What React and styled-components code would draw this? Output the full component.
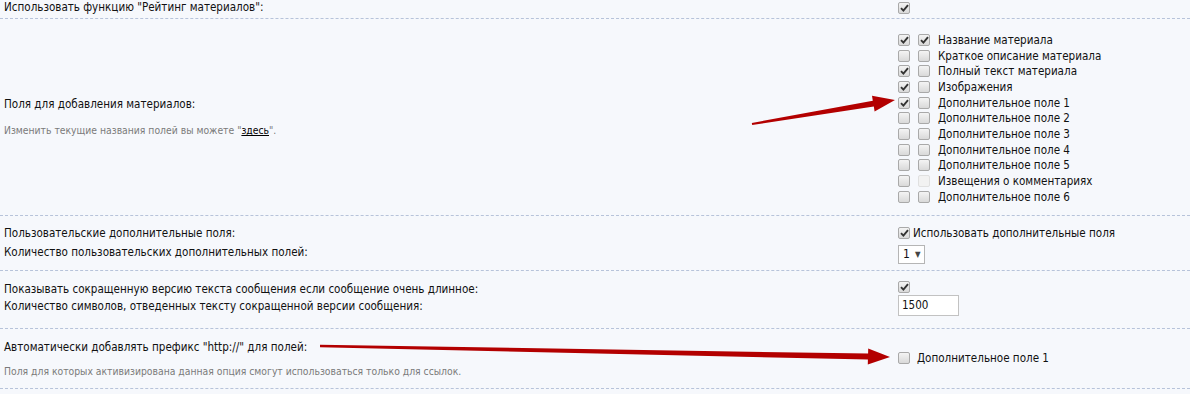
import React from 'react';
import styled, { createGlobalStyle } from 'styled-components';

const GlobalStyle = createGlobalStyle`
  html, body {
    margin: 0;
    padding: 0;
    background: #f6f8fc;
  }
  body {
    font-family: "DejaVu Sans Condensed", "DejaVu Sans", Tahoma, sans-serif;
    font-size: 11.55px;
    color: #111;
  }
`;

const Page = styled.div`
  position: relative;
  width: 1190px;
  height: 394px;
  overflow: hidden;
`;

const Table = styled.div`
  margin-top: -6px;
`;

const Row = styled.div`
  display: grid;
  grid-template-columns: 898px 1fr;
  align-items: ${p => p.$align || 'center'};
  padding: ${p => p.$pad || '8px 0'};
  border-bottom: 1px dashed #b7c3da;
`;

const Left = styled.div`
  padding-left: 4px;
  padding-bottom: ${p => p.$pb || 0}px;
  line-height: ${p => p.$lh || 19}px;
`;

const Right = styled.div`
  display: flex;
  flex-direction: column;
  align-items: flex-start;
`;

const Hint = styled.div`
  margin-top: ${p => p.$mt || 9}px;
  font-size: 10.3px;
  color: #7a7a7a;
  line-height: 14px;

  a {
    color: #000;
    text-decoration: underline;
  }
`;

const Line = styled.div`
  display: flex;
  align-items: center;
  height: ${p => p.$h || 15.7}px;
  white-space: nowrap;
`;

const Box = styled.span`
  box-sizing: border-box;
  width: 12px;
  height: 12px;
  margin-right: ${p => p.$mr || 0}px;
  border: 1px solid ${p => (p.$faded ? '#e0e0e0' : '#a9a9a9')};
  border-radius: 2px;
  background: ${p => (p.$faded ? '#f2f2f2' : 'linear-gradient(#f4f4f4, #d9d9d9)')};
  display: inline-flex;
  align-items: center;
  justify-content: center;
  flex: none;
`;

const Select = styled.div`
  box-sizing: border-box;
  margin-top: 2px;
  height: 19px;
  padding: 0 4px;
  display: flex;
  align-items: center;
  gap: 5px;
  border: 1px solid #b5b5b5;
  background: #fff;
  font-size: 12px;

  span {
    font-size: 8px;
    color: #444;
  }
`;

const Input = styled.div`
  box-sizing: border-box;
  margin-top: 2px;
  width: 61px;
  height: 21px;
  padding: 0 3px;
  display: flex;
  align-items: center;
  border: 1px solid #c2c2c2;
  background: #fff;
`;

const Overlay = styled.svg`
  position: absolute;
  left: 0;
  top: 0;
  pointer-events: none;
`;

function Check({ on, faded, mr }) {
  return (
    <Box $faded={faded} $mr={mr}>
      {on && (
        <svg width="9" height="8" viewBox="0 0 9 8">
          <path d="M1 4.2 L3.4 6.6 L8 1.2" fill="none" stroke="#333" strokeWidth="1.9" />
        </svg>
      )}
    </Box>
  );
}

const fields = [
  ['Название материала', true, true],
  ['Краткое описание материала', false, false],
  ['Полный текст материала', true, false],
  ['Изображения', true, false],
  ['Дополнительное поле 1', true, false],
  ['Дополнительное поле 2', false, false],
  ['Дополнительное поле 3', false, false],
  ['Дополнительное поле 4', false, false],
  ['Дополнительное поле 5', false, false],
  ['Извещения о комментариях', false, false, true],
  ['Дополнительное поле 6', false, false],
];

function arrow(x1, y1, x2, y2, head = 22, half = 8, w0 = 1, w1 = 3) {
  const dx = x2 - x1;
  const dy = y2 - y1;
  const len = Math.hypot(dx, dy);
  const ux = dx / len;
  const uy = dy / len;
  const nx = -uy;
  const ny = ux;
  const bx = x2 - ux * head;
  const by = y2 - uy * head;
  const pts = [
    [x1 + nx * w0, y1 + ny * w0],
    [bx + nx * w1, by + ny * w1],
    [bx + nx * half, by + ny * half],
    [x2, y2],
    [bx - nx * half, by - ny * half],
    [bx - nx * w1, by - ny * w1],
    [x1 - nx * w0, y1 - ny * w0],
  ];
  return pts.map(p => p.map(v => v.toFixed(1)).join(',')).join(' ');
}

export default function App() {
  return (
    <Page>
      <GlobalStyle />
      <Table>
        <Row $pad="4px 0 1px">
          <Left>Использовать функцию "Рейтинг материалов":</Left>
          <Right>
            <Check on />
          </Right>
        </Row>

        <Row $pad="13px 0 10px">
          <Left $pb={4}>
            Поля для добавления материалов:
            <Hint>
              Изменить текущие названия полей вы можете "<a href="#">здесь</a>".
            </Hint>
          </Left>
          <Right>
            {fields.map(([name, a, b, faded]) => (
              <Line key={name}>
                <Check on={a} mr={8} />
                <Check on={b} faded={faded} mr={8} />
                {name}
              </Line>
            ))}
          </Right>
        </Row>

        <Row $align="start" $pad="8px 0 6px">
          <Left>
            Пользовательские дополнительные поля:
            <br />
            Количество пользовательских дополнительных полей:
          </Left>
          <Right>
            <Line $h={19}>
              <Check on mr={3} />
              Использовать дополнительные поля
            </Line>
            <Select>
              1<span>▼</span>
            </Select>
          </Right>
        </Row>

        <Row $align="start" $pad="10px 0 12px">
          <Left $lh={17}>
            Показывать сокращенную версию текста сообщения если сообщение очень длинное:
            <br />
            Количество символов, отведенных тексту сокращенной версии сообщения:
          </Left>
          <Right>
            <Line $h={12}>
              <Check on />
            </Line>
            <Input>1500</Input>
          </Right>
        </Row>

        <Row $pad="9px 0 10px">
          <Left>
            Автоматически добавлять префикс "http://" для полей:
            <Hint $mt={7}>Поля для которых активизирована данная опция смогут использоваться только для ссылок.</Hint>
          </Left>
          <Right>
            <Line>
              <Check mr={7} />
              Дополнительное поле 1
            </Line>
          </Right>
        </Row>
      </Table>

      <Overlay width="1190" height="394">
        <polygon points={arrow(752, 124, 895, 100)} fill="#b30000" />
        <polygon points={arrow(320, 346, 890, 357, 22, 8, 1.2, 3)} fill="#b30000" />
      </Overlay>
    </Page>
  );
}
